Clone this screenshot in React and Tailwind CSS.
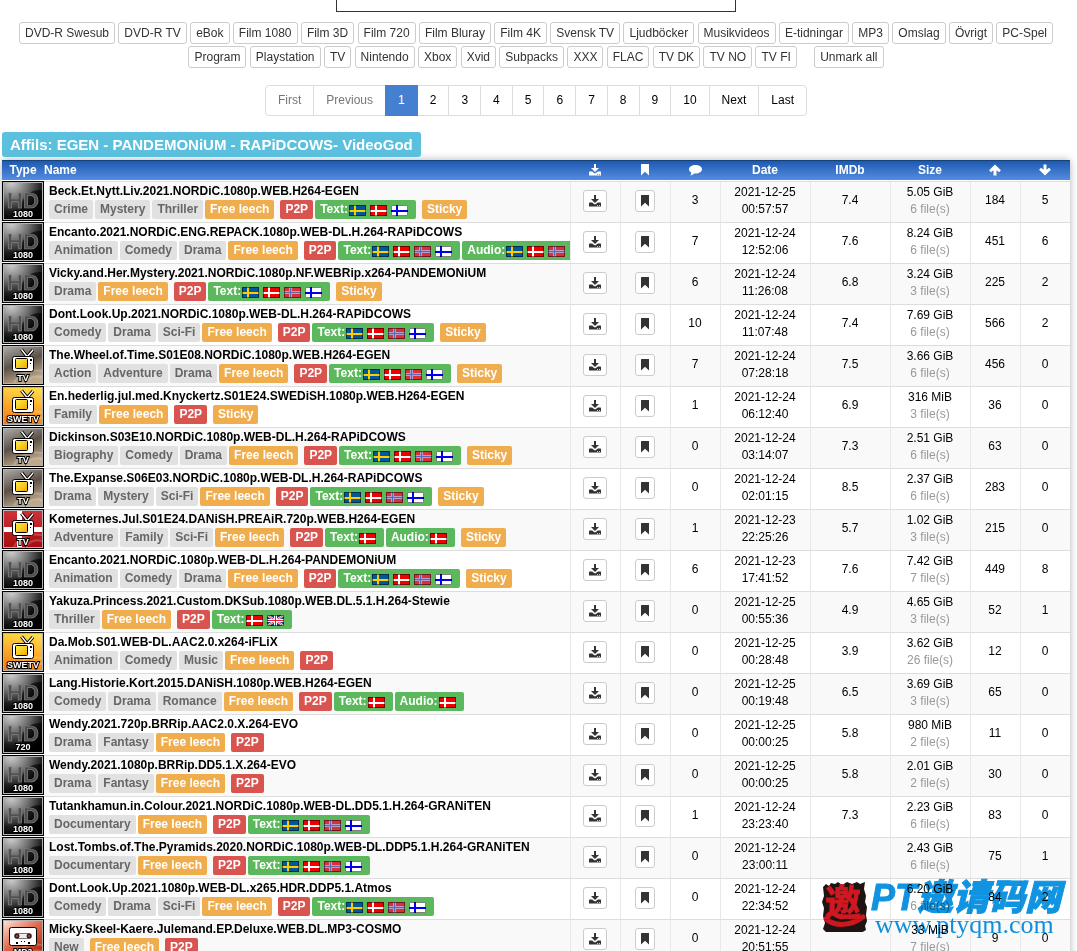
const categories = [
  'DVD-R Swesub', 'DVD-R TV', 'eBok', 'Film 1080', 'Film 3D', 'Film 720', 'Film Bluray', 'Film 4K',
  'Svensk TV', 'Ljudböcker', 'Musikvideos', 'E-tidningar', 'MP3', 'Omslag', 'Övrigt', 'PC-Spel',
  'Program', 'Playstation', 'TV', 'Nintendo', 'Xbox', 'Xvid', 'Subpacks', 'XXX', 'FLAC', 'TV DK',
  'TV NO', 'TV FI',
];

const pages = ['First', 'Previous', '1', '2', '3', '4', '5', '6', '7', '8', '9', '10', 'Next', 'Last'];

const NORDIC = ['se', 'dk', 'no', 'fi'];

const torrents = [
  { type: '1080', name: 'Beck.Et.Nytt.Liv.2021.NORDiC.1080p.WEB.H264-EGEN', genres: ['Crime', 'Mystery', 'Thriller'], text: ['se', 'dk', 'fi'], sticky: true, comments: 3, date: '2021-12-25', time: '00:57:57', imdb: '7.4', size: '5.05 GiB', files: 6, up: 184, down: 5 },
  { type: '1080', name: 'Encanto.2021.NORDiC.ENG.REPACK.1080p.WEB-DL.H.264-RAPiDCOWS', genres: ['Animation', 'Comedy', 'Drama'], text: NORDIC, audio: ['se', 'dk', 'no'], comments: 7, date: '2021-12-24', time: '12:52:06', imdb: '7.6', size: '8.24 GiB', files: 6, up: 451, down: 6 },
  { type: '1080', name: 'Vicky.and.Her.Mystery.2021.NORDiC.1080p.NF.WEBRip.x264-PANDEMONiUM', genres: ['Drama'], text: NORDIC, sticky: true, comments: 6, date: '2021-12-24', time: '11:26:08', imdb: '6.8', size: '3.24 GiB', files: 3, up: 225, down: 2 },
  { type: '1080', name: 'Dont.Look.Up.2021.NORDiC.1080p.WEB-DL.H.264-RAPiDCOWS', genres: ['Comedy', 'Drama', 'Sci-Fi'], text: NORDIC, sticky: true, comments: 10, date: '2021-12-24', time: '11:07:48', imdb: '7.4', size: '7.69 GiB', files: 6, up: 566, down: 2 },
  { type: 'tv', name: 'The.Wheel.of.Time.S01E08.NORDiC.1080p.WEB.H264-EGEN', genres: ['Action', 'Adventure', 'Drama'], text: NORDIC, sticky: true, comments: 7, date: '2021-12-24', time: '07:28:18', imdb: '7.5', size: '3.66 GiB', files: 6, up: 456, down: 0 },
  { type: 'swetv', name: 'En.hederlig.jul.med.Knyckertz.S01E24.SWEDiSH.1080p.WEB.H264-EGEN', genres: ['Family'], sticky: true, comments: 1, date: '2021-12-24', time: '06:12:40', imdb: '6.9', size: '316 MiB', files: 3, up: 36, down: 0 },
  { type: 'tv', name: 'Dickinson.S03E10.NORDiC.1080p.WEB-DL.H.264-RAPiDCOWS', genres: ['Biography', 'Comedy', 'Drama'], text: NORDIC, sticky: true, comments: 0, date: '2021-12-24', time: '03:14:07', imdb: '7.3', size: '2.51 GiB', files: 6, up: 63, down: 0 },
  { type: 'tv', name: 'The.Expanse.S06E03.NORDiC.1080p.WEB-DL.H.264-RAPiDCOWS', genres: ['Drama', 'Mystery', 'Sci-Fi'], text: NORDIC, sticky: true, comments: 0, date: '2021-12-24', time: '02:01:15', imdb: '8.5', size: '2.37 GiB', files: 6, up: 283, down: 0 },
  { type: 'dktv', name: 'Kometernes.Jul.S01E24.DANiSH.PREAiR.720p.WEB.H264-EGEN', genres: ['Adventure', 'Family', 'Sci-Fi'], text: ['dk'], audio: ['dk'], sticky: true, comments: 1, date: '2021-12-23', time: '22:25:26', imdb: '5.7', size: '1.02 GiB', files: 3, up: 215, down: 0 },
  { type: '1080', name: 'Encanto.2021.NORDiC.1080p.WEB-DL.H.264-PANDEMONiUM', genres: ['Animation', 'Comedy', 'Drama'], text: NORDIC, sticky: true, comments: 6, date: '2021-12-23', time: '17:41:52', imdb: '7.6', size: '7.42 GiB', files: 7, up: 449, down: 8 },
  { type: '1080', name: 'Yakuza.Princess.2021.Custom.DKSub.1080p.WEB.DL.5.1.H.264-Stewie', genres: ['Thriller'], text: ['dk', 'gb'], comments: 0, date: '2021-12-25', time: '00:55:36', imdb: '4.9', size: '4.65 GiB', files: 3, up: 52, down: 1 },
  { type: 'swetv', name: 'Da.Mob.S01.WEB-DL.AAC2.0.x264-iFLiX', genres: ['Animation', 'Comedy', 'Music'], comments: 0, date: '2021-12-25', time: '00:28:48', imdb: '3.9', size: '3.62 GiB', files: 26, up: 12, down: 0 },
  { type: '1080', name: 'Lang.Historie.Kort.2015.DANiSH.1080p.WEB.H264-EGEN', genres: ['Comedy', 'Drama', 'Romance'], text: ['dk'], audio: ['dk'], comments: 0, date: '2021-12-25', time: '00:19:48', imdb: '6.5', size: '3.69 GiB', files: 3, up: 65, down: 0 },
  { type: '720', name: 'Wendy.2021.720p.BRRip.AAC2.0.X.264-EVO', genres: ['Drama', 'Fantasy'], comments: 0, date: '2021-12-25', time: '00:00:25', imdb: '5.8', size: '980 MiB', files: 2, up: 11, down: 0 },
  { type: '1080', name: 'Wendy.2021.1080p.BRRip.DD5.1.X.264-EVO', genres: ['Drama', 'Fantasy'], comments: 0, date: '2021-12-25', time: '00:00:25', imdb: '5.8', size: '2.01 GiB', files: 2, up: 30, down: 0 },
  { type: '1080', name: 'Tutankhamun.in.Colour.2021.NORDiC.1080p.WEB-DL.DD5.1.H.264-GRANiTEN', genres: ['Documentary'], text: NORDIC, comments: 1, date: '2021-12-24', time: '23:23:40', imdb: '7.3', size: '2.23 GiB', files: 6, up: 83, down: 0 },
  { type: '1080', name: 'Lost.Tombs.of.The.Pyramids.2020.NORDiC.1080p.WEB-DL.DDP5.1.H.264-GRANiTEN', genres: ['Documentary'], text: NORDIC, comments: 0, date: '2021-12-24', time: '23:00:11', imdb: '', size: '2.43 GiB', files: 6, up: 75, down: 1 },
  { type: '1080', name: 'Dont.Look.Up.2021.1080p.WEB-DL.x265.HDR.DDP5.1.Atmos', genres: ['Comedy', 'Drama', 'Sci-Fi'], text: NORDIC, comments: 0, date: '2021-12-24', time: '22:34:52', imdb: '', size: '6.20 GiB', files: 6, up: 84, down: 2 },
  { type: 'mp3', name: 'Micky.Skeel-Kaere.Julemand.EP.Deluxe.WEB.DL.MP3-COSMO', genres: ['New'], comments: 0, date: '2021-12-24', time: '20:51:55', imdb: '', size: '33 MiB', files: 7, up: 9, down: 0 },
];

function DownloadIcon() {
  return (
    <svg width="12" height="12" viewBox="0 0 12 12" fill="currentColor" aria-hidden="true">
      <path d="M5 0h2v4h3L6 8 2 4h3z" />
      <path fillRule="evenodd" d="M.5 7.500h2.700L5.300 9.300h1.400L8.800 7.500h2.700L12 8v3.500H0V8zM8 10v.7h1V10zM10 10v.7h1V10z" />
    </svg>
  );
}

function BookmarkIcon() {
  return (
    <svg width="10" height="12" viewBox="0 0 10 12" fill="currentColor" aria-hidden="true">
      <path d="M1.400 0H9v11.500L5 7.800 1 11.500V.4z" />
    </svg>
  );
}

function CommentIcon() {
  return (
    <svg width="13" height="12" viewBox="0 0 13 12" fill="currentColor" aria-hidden="true">
      <path d="M6.5 1C10 1 13 2.800 13 5.300S10 9.600 6.500 9.600c-.5 0-1 0-1.400-.1C4.200 10.600 2.800 11.300 1.200 11.400c.8-.8 1.200-1.700 1.200-2.700C.9 7.900 0 6.700 0 5.300 0 2.800 3 1 6.500 1z" />
    </svg>
  );
}

function ArrowIcon({ down }) {
  return (
    <svg width="12" height="12" viewBox="0 0 12 12" fill="currentColor" className={down ? 'rotate-180' : ''} aria-hidden="true">
      <path d="M6 .5 11.900 6.300 10 8.200 7.500 6.200V11.500H4.500V6.200L2 8.200.1 6.300z" />
    </svg>
  );
}

const crosses = {
  se: { bg: '#00589c', outer: '#ffcc00', inner: null },
  dk: { bg: '#f00000', outer: '#ffffff', inner: null },
  fi: { bg: '#ffffff', outer: '#0000ee', inner: null },
  no: { bg: '#dc3038', outer: '#b49ccc', inner: '#5a68b4' },
};

function Flag({ code }) {
  const c = crosses[code];
  return (
    <svg width="17" height="11" viewBox="0 0 17 11" className="ml-px mr-[3px] mt-[2px] shrink-0" role="img" aria-label={code}>
      {c ? (
        <>
          <path fill={c.bg} d="M0 0h17v11H0z" />
          <path fill={c.outer} d={c.inner ? 'M0 4h17v3H0zM5 0h3v11H5z' : 'M0 5h17v2H0zM5 0h2v11H5z'} />
          {c.inner && <path fill={c.inner} d="M0 5h17v1H0zM6 0h1v11H6z" />}
        </>
      ) : (
        <>
          <path fill="#1c3f94" d="M0 0h17v11H0z" />
          <path stroke="#fff" strokeWidth="2" d="m0 0 17 11M17 0 0 11" />
          <path stroke="#e02030" strokeWidth="0.8" d="m0 0 17 11M17 0 0 11" />
          <path fill="#fff" d="M0 4h17v3H0zM7 0h3v11H7z" />
          <path fill="#e02030" d="M0 5h17v1H0zM8 0h1v11H8z" />
        </>
      )}
      <path fill="none" stroke="#000" strokeOpacity="0.5" d="M.5.5h16v10H.5z" />
    </svg>
  );
}

function IconCaption({ children }) {
  return (
    <text
      x="21" y="36" textAnchor="middle" fontSize="9" fontWeight="700"
      fill="#fff" stroke="#000" strokeWidth="2" paintOrder="stroke" fontFamily="Liberation Sans, sans-serif"
    >
      {children}
    </text>
  );
}

function Television() {
  return (
    <g>
      <path stroke="#000" strokeWidth="3.4" fill="none" d="m19.500 4.500 5.500 7M31 5l-6 7" />
      <path stroke="#fff" strokeWidth="1.4" fill="none" d="m19.500 4.500 5.500 7M31 5l-6 7" />
      <rect x="10.500" y="11.500" width="21" height="15" rx="2" fill="#fff" stroke="#000" />
      <rect x="13.500" y="13.500" width="12" height="10" rx="1" fill="url(#screen)" stroke="#000" />
      <path fill="#000" d="M28 14h2v2h-2zM28 18h1v1h-1z" />
    </g>
  );
}

function TypeIcon({ type }) {
  const hd = type === '1080' || type === '720';
  const captions = { tv: 'TV', dktv: 'TV', swetv: 'SWETV', mp3: 'MP3' };
  return (
    <svg width="42" height="40" viewBox="0 0 42 40" className="block" role="img" aria-label={type}>
      <path d="M0 0h42v40H0z" />
      <rect x="1.500" y="1.500" width="39" height="37" fill={`url(#bg-${hd ? 'hd' : type})`} stroke="#b4b4b4" />
      {hd && (
        <>
          <path d="M24 38C18 30 17 20 26 13c5-4 10-4 14-4v29z" fill="#000" fillOpacity="0.6" />
          <text x="5" y="27" fontSize="22" fontWeight="700" fontFamily="Liberation Sans, sans-serif" fill="#505050" stroke="#808080" strokeWidth="0.7">HD</text>
        </>
      )}
      {type === 'dktv' && <path fill="#fff" d="M2 18h38v5H2zM15 2h5v36h-5z" />}
      {!hd && <path fill="none" stroke="#fff" strokeOpacity="0.2" strokeWidth="2" d="M12 38c4-9 14-14 28-12M24 38c3-5 8-8 16-6" />}
      {type === 'mp3' ? (
        <g>
          <rect x="7.500" y="8.500" width="27" height="18" rx="2" fill="#fff" stroke="#000" />
          <rect x="12.500" y="14.500" width="17" height="5" rx="2" fill="#eee" stroke="#777" />
          <circle cx="15" cy="17" r="2" fill="#a33" stroke="#000" />
          <circle cx="27" cy="17" r="2" fill="#a33" stroke="#000" />
          <path d="M14 23h2v2h-2zM19 22h1v1h-1zM22 22h1v1h-1zM26 23h2v2h-2z" />
        </g>
      ) : !hd && <Television />}
      <IconCaption>{hd ? type : captions[type]}</IconCaption>
    </svg>
  );
}

function IconDefs() {
  return (
    <svg width="0" height="0" className="absolute" aria-hidden="true">
      <defs>
        <radialGradient id="bg-hd" cx="0.2" cy="0" r="1.05">
          <stop offset="0" stopColor="#d0d0d0" />
          <stop offset="0.4" stopColor="#767676" />
          <stop offset="0.75" stopColor="#1c1c1c" />
          <stop offset="1" stopColor="#000" />
        </radialGradient>
        <linearGradient id="bg-tv" x1="0.1" y1="0" x2="0.5" y2="1">
          <stop offset="0" stopColor="#aaa6a2" />
          <stop offset="0.5" stopColor="#5c5148" />
          <stop offset="1" stopColor="#c0a988" />
        </linearGradient>
        <linearGradient id="bg-swetv" x1="0.6" y1="0" x2="0.4" y2="1">
          <stop offset="0" stopColor="#ffdc48" />
          <stop offset="1" stopColor="#f57a12" />
        </linearGradient>
        <linearGradient id="bg-dktv" x1="0" y1="0" x2="0" y2="1">
          <stop offset="0" stopColor="#cc3338" />
          <stop offset="1" stopColor="#a80c10" />
        </linearGradient>
        <linearGradient id="bg-mp3" x1="0" y1="0" x2="0.8" y2="1">
          <stop offset="0" stopColor="#fde4dc" />
          <stop offset="0.5" stopColor="#e0694a" />
          <stop offset="1" stopColor="#b02808" />
        </linearGradient>
        <linearGradient id="screen" x1="0" y1="0" x2="1" y2="1">
          <stop offset="0" stopColor="#fff04a" />
          <stop offset="1" stopColor="#f0a800" />
        </linearGradient>
      </defs>
    </svg>
  );
}

function Tag({ className, children }) {
  return (
    <span className={`flex h-[19px] shrink-0 rounded-xs px-[5px] font-bold leading-[18px] ${className}`}>
      {children}
    </span>
  );
}

function FlagTag({ label, flags }) {
  return (
    <span className="flex h-[19px] shrink-0 items-center rounded-xs bg-[#5cb85c] px-[5px] font-bold leading-[18px] text-white">
      <span className="h-[19px]">{label}</span>
      {flags.map((code) => <Flag key={code} code={code} />)}
    </span>
  );
}

function TorrentRow({ t }) {
  const cell = 'border-l border-t border-l-[#e8e8e8] border-t-[#dddddd] p-0 pb-[3px] pr-px align-middle';
  const iconButton = 'inline-flex h-[22px] items-center justify-center rounded-[3px] border border-[#cccccc] bg-white align-middle text-[#333333]';
  return (
    <tr className="h-[41px] odd:bg-[#f9f9f9]">
      <td className="p-0 align-top"><TypeIcon type={t.type} /></td>
      <td className="overflow-hidden whitespace-nowrap border-t border-[#dddddd] p-0 pl-[5px] pt-px text-left align-top">
        <a href="#details" className="block font-bold">{t.name}</a>
        <div className="flex gap-[2px]">
          {t.genres.map((g) => <Tag key={g} className="bg-[#e1e1e1] text-[#666666]">{g}</Tag>)}
          <Tag className={t.type === 'mp3' ? 'ml-1 bg-[#f0ad4e] text-white' : 'bg-[#f0ad4e] text-white'}>Free leech</Tag>
          <Tag className="ml-1 bg-[#d9534f] text-white">P2P</Tag>
          {t.text && <FlagTag label="Text:" flags={t.text} />}
          {t.audio && <FlagTag label="Audio:" flags={t.audio} />}
          {t.sticky && <Tag className="ml-1 bg-[#f0ad4e] text-white">Sticky</Tag>}
        </div>
      </td>
      <td className={cell}>
        <button type="button" aria-label="Download" className={`${iconButton} w-6`}><DownloadIcon /></button>
      </td>
      <td className={cell}>
        <button type="button" aria-label="Bookmark" className={`${iconButton} w-5`}><BookmarkIcon /></button>
      </td>
      <td className={cell}><a href="#comments">{t.comments}</a></td>
      <td className={cell}>{t.date}<br />{t.time}</td>
      <td className={cell}>{t.imdb}</td>
      <td className={cell}>{t.size}<br /><span className="text-[#999999]">{t.files} file(s)</span></td>
      <td className={cell}>{t.up}</td>
      <td className={cell}>{t.down}</td>
    </tr>
  );
}

function Watermark() {
  return (
    <div className="absolute bottom-[15px] right-4 flex items-start gap-1 mix-blend-multiply">
      <svg width="46" height="50" viewBox="0 0 46 50" aria-hidden="true">
        <path fill="#1d1413" d="m2 5 3-3 3 2 2-3 4 1 3-2 4 3 5-3 5 2 5-2 3 2 5-2-1 7 2 7-1 6 2 5-1 8 1 6-2 5 1 4-5 3-5-1-5 2-6-2-7 2-6-2-5 1-4-4 2-6-2-7 1-8-2-6 2-6z" />
        <text x="4" y="34" fontSize="36" fontWeight="700" fill="#d01820" stroke="#d01820" fontFamily="Noto Sans CJK SC, sans-serif">邀</text>
        <path d="M5 37c8 7 24 8 37-2" fill="none" stroke="#d01820" strokeWidth="5" strokeLinecap="round" />
      </svg>
      <div className="text-[#1094e2]">
        <div className="h-[32px] whitespace-nowrap font-['Liberation_Sans','Noto_Sans_CJK_SC',sans-serif] text-[36px] font-black italic leading-[32px] [-webkit-text-stroke:1px_#1094e2]">PT邀请码网</div>
        <div className="whitespace-nowrap pl-1 font-['Liberation_Serif',serif] text-[26px] leading-[22px]">www.ptyqm.com</div>
      </div>
    </div>
  );
}

export default function App() {
  const th = 'p-0 font-bold';
  const filterButton = 'h-[22px] rounded-[3px] border border-[#cccccc] bg-white px-[5px] align-middle leading-[18px] text-[#333333]';
  return (
    <div className="relative h-screen overflow-hidden bg-white pl-[2px] pr-[7px] font-['Liberation_Sans',Arial,sans-serif] text-[12px] leading-[17px] text-black">
      <IconDefs />
      <div className="mx-auto h-3 w-[400px] border border-t-0 border-[#333333]" />

      {/* Category filter */}
      <div className="mt-2 text-center leading-[24px]">
        {categories.map((c) => (
          <span key={c}>
            <button type="button" className={filterButton}>{c}</button>{' '}
          </span>
        ))}
        <button type="button" className={`${filterButton} ml-[14px]`}>Unmark all</button>
      </div>

      <nav aria-label="Pages" className="mt-[17px] flex justify-center">
        {pages.map((p, i) => (
          <a
            key={p}
            href="#page"
            className={`h-[31px] border px-3 leading-[29px] first:rounded-l last:rounded-r ${i > 0 ? '-ml-px' : ''} ${
              p === '1' ? 'z-10 border-[#447fd0] bg-[#447fd0] text-white' : 'border-[#dddddd]'
            } ${i < 2 ? 'text-[#777777]' : ''}`}
          >
            {p}
          </a>
        ))}
      </nav>

      <div className="mt-4 flex">
        <h1 className="rounded-[3px] bg-[#5bc0de] px-2 text-[15px] font-bold leading-[25px] text-white">
          Affils: EGEN - PANDEMONiUM - RAPiDCOWS- VideoGod
        </h1>
      </div>

      <table className="mt-[3px] w-full table-fixed border-separate border-spacing-0 text-center shadow-[0_0_8px_rgba(0,0,0,0.3)]">
        <colgroup>
          <col className="w-[42px]" />
          <col />
          <col className="w-[50px]" />
          <col className="w-[50px]" />
          <col className="w-[50px]" />
          <col className="w-[90px]" />
          <col className="w-[80px]" />
          <col className="w-[80px]" />
          <col className="w-[50px]" />
          <col className="w-[50px]" />
        </colgroup>
        <thead className="bg-linear-to-b from-[#1b57ae] to-[#5590e4] text-white">
          <tr className="h-[21px] [&>th]:border-b [&>th]:border-t [&>th]:border-b-white [&>th]:border-t-[#154278] [&_svg]:mb-[2px]">
            <th className={th}>Type</th>
            <th className={`${th} text-left`}>Name</th>
            <th className={th} aria-label="Download"><span className="flex justify-center"><DownloadIcon /></span></th>
            <th className={th} aria-label="Bookmark"><span className="flex justify-center"><BookmarkIcon /></span></th>
            <th className={th} aria-label="Comments"><span className="flex justify-center"><CommentIcon /></span></th>
            <th className={th}>Date</th>
            <th className={th}>IMDb</th>
            <th className={th}>Size</th>
            <th className={th} aria-label="Seeders"><span className="flex justify-center"><ArrowIcon /></span></th>
            <th className={th} aria-label="Leechers"><span className="flex justify-center"><ArrowIcon down /></span></th>
          </tr>
        </thead>
        <tbody>
          {torrents.map((t) => <TorrentRow key={t.name} t={t} />)}
        </tbody>
      </table>

      <Watermark />
    </div>
  );
}
